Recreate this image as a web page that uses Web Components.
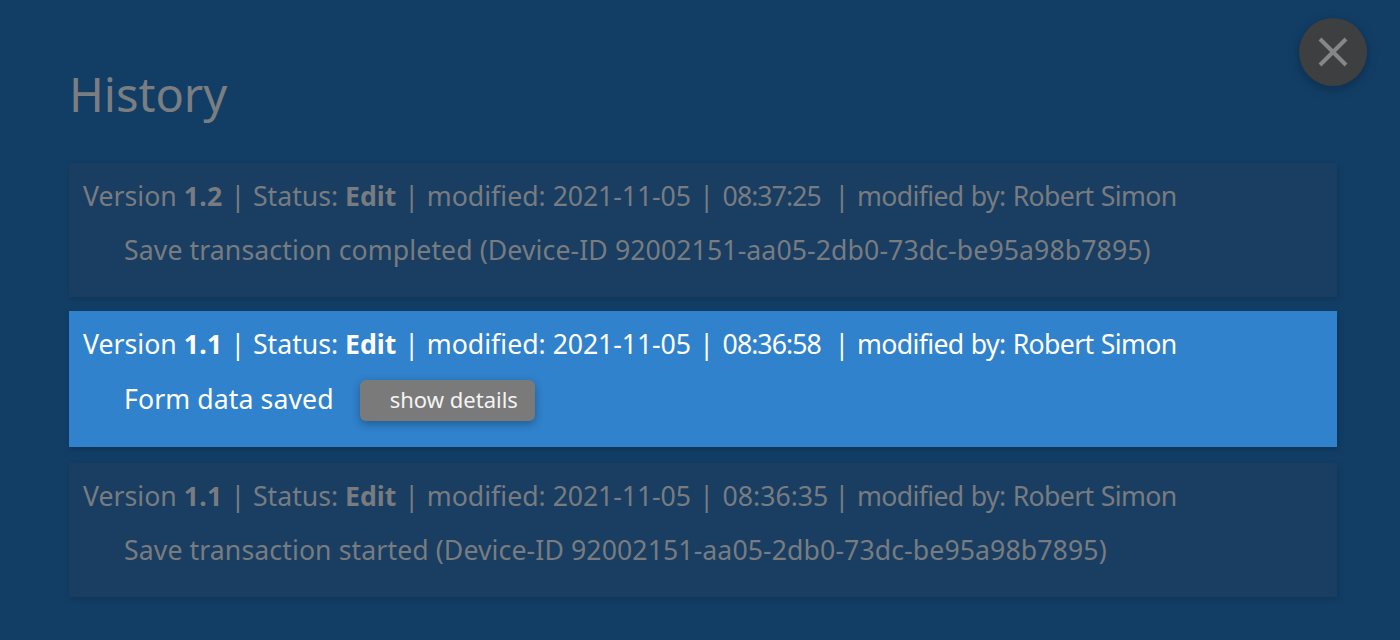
<!DOCTYPE html>
<html>
<head>
<meta charset="utf-8">
<style>
  html, body { margin: 0; height: 100%; background: #123e66; }
  body { font-family: "Noto Sans", sans-serif; overflow: hidden; }
</style>
</head>
<body>
<history-dialog>
  <history-entry version="1.2" time="08:37:25" narrow>
    Save transaction completed (Device-ID 92002151-aa05-2db0-73dc-be95a98b7895)
  </history-entry>
  <history-entry version="1.1" time="08:36:58" narrow active details>
    Form data saved
  </history-entry>
  <history-entry version="1.1" time="08:36:35">
    Save transaction started (Device-ID 92002151-aa05-2db0-73dc-be95a98b7895)
  </history-entry>
</history-dialog>

<script>
const dialogTemplate = document.createElement('template');
dialogTemplate.innerHTML = `
  <style>
    :host { display: block; position: relative; width: 1400px; height: 640px; box-sizing: border-box; padding: 63px 63px 0 69px; }
    h1 { margin: 0 0 37px 0; font-size: 47px; line-height: 63px; font-weight: 400; color: #7a7e81; }
    .list { display: flex; flex-direction: column; }
    .close {
      position: absolute; left: 1299px; top: 18px; width: 68px; height: 68px; border-radius: 50%;
      background: #3d3f41; border: none; padding: 0; display: flex; align-items: center; justify-content: center;
      box-shadow: 0 3px 12px rgba(0,0,0,.28);
    }
    svg { display: block; }
  </style>
  <h1>History</h1>
  <div class="list"><slot></slot></div>
  <button class="close" aria-label="close">
    <svg width="32" height="32" viewBox="0 0 32 32"><path d="M3 3 L29 29 M29 3 L3 29" stroke="#848687" stroke-width="4" fill="none"/></svg>
  </button>
`;

class HistoryDialog extends HTMLElement {
  constructor() {
    super();
    this.attachShadow({ mode: 'open' });
    this.shadowRoot.appendChild(dialogTemplate.content.cloneNode(true));
  }
}

const entryTemplate = document.createElement('template');
entryTemplate.innerHTML = `
  <style>
    :host {
      display: block; box-sizing: border-box; height: 134px; margin-bottom: 14px; padding: 16px 14px 0;
      background: #1a3e62; color: #787c80; font-size: 26.67px; line-height: 34px;
      box-shadow: 1px 2px 6px rgba(0,0,0,.16);
    }
    :host([active]) { height: 136px; margin-bottom: 16px; background: #3082cc; color: #fff; box-shadow: 1px 2px 6px rgba(0,0,0,.22); }
    b { font-weight: 700; }
    .ver { letter-spacing: .3px; }
    .head { white-space: pre; }
    .sep { margin: 0 .9px; }
    .sep.wide { margin: 0 1.6px; }
    .date { letter-spacing: -.1px; }
    .time { display: inline-block; width: 104px; }
    :host([narrow]) .time { letter-spacing: -.95px; }
    .by { letter-spacing: -.64px; word-spacing: .9px; }
    .text { display: flex; align-items: center; height: 34px; margin: 20px 0 0 41px; white-space: nowrap; letter-spacing: .09px; }
    :host([active]) .text { margin-top: 21px; }
    button {
      display: none; margin: 3px 0 0 26px; box-sizing: border-box; width: 175px; height: 41px; padding: 0 0 3px 30px; text-align: left;
      border: none; border-radius: 6px; background: #7a7a7a; color: #f4f4f4;
      font: 400 22px "Noto Sans", sans-serif; box-shadow: 0 3px 8px rgba(0,0,0,.3);
    }
    :host([details]) button { display: block; }
  </style>
  <div class="head">Version <b class="ver"></b> <span class="sep">|</span> Status: <b>Edit</b> <span class="sep">|</span> modified: <span class="date">2021-11-05</span> <span class="sep wide">|</span> <span class="time"></span> <span class="sep">|</span> <span class="by">modified by: Robert Simon</span></div>
  <div class="text"><slot></slot><button>show details</button></div>
`;

class HistoryEntry extends HTMLElement {
  constructor() {
    super();
    this.attachShadow({ mode: 'open' });
    this.shadowRoot.appendChild(entryTemplate.content.cloneNode(true));
    this.shadowRoot.querySelector('.ver').textContent = this.getAttribute('version');
    this.shadowRoot.querySelector('.time').textContent = this.getAttribute('time');
  }
}

customElements.define('history-dialog', HistoryDialog);
customElements.define('history-entry', HistoryEntry);
</script>
</body>
</html>
